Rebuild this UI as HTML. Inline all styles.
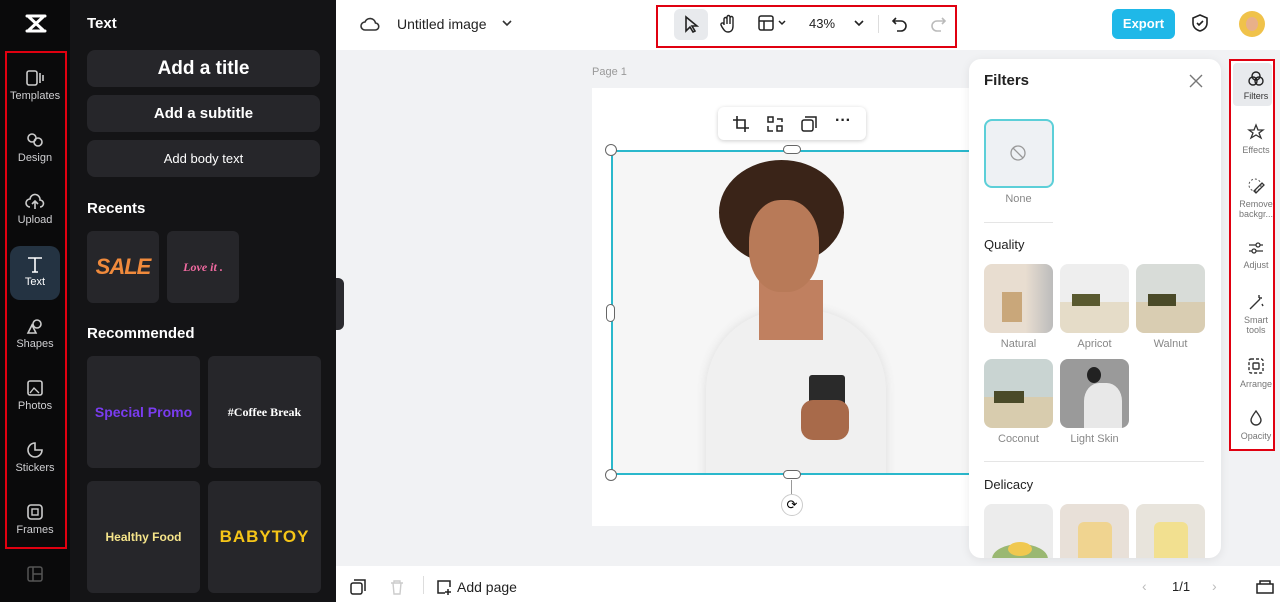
<!DOCTYPE html>
<html><head><meta charset="utf-8"><style>
*{box-sizing:border-box;margin:0;padding:0}
body{width:1280px;height:602px;overflow:hidden;font-family:"Liberation Sans",sans-serif;background:#f1f2f4;position:relative}
.abs{position:absolute}
.rail{left:0;top:0;width:70px;height:602px;background:#0a0a0b}
.panel{left:70px;top:0;width:266px;height:602px;background:#141416;color:#fff}
.ri{position:absolute;left:10px;width:50px;height:54px;color:#cfcfd2;font-size:11px;text-align:center}
.ri svg{display:block;margin:9px auto 3px}
.btn{position:absolute;left:17px;width:233px;background:#26262a;border-radius:8px;color:#fff;font-weight:bold;text-align:center}
.card{position:absolute;background:#26262a;border-radius:6px}
.top{left:336px;top:0;width:944px;height:50px;background:#fff}
.bot{left:336px;top:566px;width:944px;height:36px;background:#fff}
.ft{position:absolute;width:69px;height:69px;border-radius:8px;overflow:hidden}
.fl{position:absolute;font-size:11px;color:#888;width:69px;text-align:center}
.tl{position:absolute;width:46px;left:1233px;text-align:center;font-size:9px;color:#777}
.tl svg{display:block;margin:0 auto 4px}
</style></head><body>
<div class="abs rail">
<svg class="abs" style="left:24px;top:13px" width="24" height="21" viewBox="0 0 24 21"><path d="M3 3h18M3 18h18M5 4l14 13M19 4L5 17" stroke="#fff" stroke-width="3" stroke-linecap="round" fill="none"/></svg>
<div class="abs" style="left:5px;top:51px;width:62px;height:498px;border:2px solid #e00010"></div>
<div class="ri" style="top:60px"><svg width="20" height="18"><rect x="2" y="2" width="10" height="14" rx="2" fill="none" stroke="#ccc" stroke-width="1.6"/><path d="M15 4v10M18 6v6" stroke="#ccc" stroke-width="1.6"/></svg>Templates</div>
<div class="ri" style="top:122px"><svg width="20" height="18"><circle cx="7" cy="7" r="4" fill="none" stroke="#ccc" stroke-width="1.6"/><circle cx="13" cy="11" r="4" fill="none" stroke="#ccc" stroke-width="1.6"/></svg>Design</div>
<div class="ri" style="top:184px"><svg width="20" height="18"><path d="M5 14a4 4 0 0 1 0-8a5 5 0 0 1 10 1a3.5 3.5 0 0 1 0 7M10 16V9M7 11l3-3 3 3" fill="none" stroke="#ccc" stroke-width="1.6"/></svg>Upload</div>
<div class="ri" style="top:246px;background:#243342;border-radius:10px;color:#fff"><svg width="20" height="18"><path d="M3 3h14M10 3v14M7 17h6" stroke="#fff" stroke-width="1.6" fill="none"/></svg>Text</div>
<div class="ri" style="top:308px"><svg width="20" height="18"><circle cx="12" cy="7" r="4" fill="none" stroke="#ccc" stroke-width="1.6"/><path d="M3 16l4-8 4 8z" fill="none" stroke="#ccc" stroke-width="1.6"/></svg>Shapes</div>
<div class="ri" style="top:370px"><svg width="20" height="18"><rect x="3" y="2" width="14" height="14" rx="2" fill="none" stroke="#ccc" stroke-width="1.6"/><path d="M5 14l4-5 5 5" fill="none" stroke="#ccc" stroke-width="1.4"/></svg>Photos</div>
<div class="ri" style="top:432px"><svg width="20" height="18"><path d="M10 2a7 7 0 1 0 7 7h-7z" fill="none" stroke="#ccc" stroke-width="1.6"/></svg>Stickers</div>
<div class="ri" style="top:494px"><svg width="20" height="18"><rect x="3" y="2" width="14" height="14" rx="3" fill="none" stroke="#ccc" stroke-width="1.6"/><rect x="7" y="6" width="6" height="6" fill="none" stroke="#ccc" stroke-width="1.4"/></svg>Frames</div>
<svg class="abs" style="left:27px;top:566px" width="16" height="16"><rect x="1" y="1" width="14" height="14" rx="2" fill="none" stroke="#555" stroke-width="1.5"/><path d="M6 1v14M6 8h9" stroke="#555" stroke-width="1.5"/></svg>
</div>
<div class="abs panel">
<div class="abs" style="left:17px;top:15px;font-size:15px;font-weight:bold">Text</div>
<div class="btn" style="top:50px;height:37px;line-height:37px;font-size:19px">Add a title</div>
<div class="btn" style="top:95px;height:37px;line-height:37px;font-size:15px">Add a subtitle</div>
<div class="btn" style="top:140px;height:37px;line-height:37px;font-size:13px;font-weight:normal">Add body text</div>
<div class="abs" style="left:17px;top:200px;font-size:15px;font-weight:bold">Recents</div>
<div class="card" style="left:17px;top:231px;width:72px;height:72px;text-align:center;line-height:72px;color:#f08a3c;font-weight:bold;font-style:italic;font-size:22px;letter-spacing:-1px">SALE</div>
<div class="card" style="left:97px;top:231px;width:72px;height:72px;text-align:center;line-height:72px;color:#f06aa0;font-weight:bold;font-style:italic;font-size:12px;font-family:'Liberation Serif',serif">Love it .</div>
<div class="abs" style="left:17px;top:325px;font-size:15px;font-weight:bold">Recommended</div>
<div class="card" style="left:17px;top:356px;width:113px;height:112px;text-align:center;line-height:112px;color:#7a3cf0;font-weight:bold;font-size:14px">Special Promo</div>
<div class="card" style="left:138px;top:356px;width:113px;height:112px;text-align:center;line-height:112px;color:#fff;font-weight:bold;font-size:12px;font-family:'Liberation Serif',serif">#Coffee Break</div>
<div class="card" style="left:17px;top:481px;width:113px;height:112px;text-align:center;line-height:112px;color:#f5e48a;font-weight:bold;font-size:12px">Healthy Food</div>
<div class="card" style="left:138px;top:481px;width:113px;height:112px;text-align:center;line-height:112px;color:#f5c518;font-weight:bold;font-size:17px;letter-spacing:1px">BABYTOY</div>
</div>
<div class="abs" style="left:336px;top:278px;width:8px;height:52px;background:#2a2a2e;border-radius:0 6px 6px 0"></div>
<div class="abs top">
<svg class="abs" style="left:24px;top:15px" width="20" height="18"><path d="M5 15a4 4 0 0 1 0-8a5.5 5.5 0 0 1 10.5 1a3.5 3.5 0 0 1-0.5 7z" fill="none" stroke="#333" stroke-width="1.6"/></svg>
<div class="abs" style="left:61px;top:16px;font-size:14px;color:#222">Untitled image</div>
<svg class="abs" style="left:165px;top:18px" width="12" height="10"><path d="M2 3l4 4 4-4" fill="none" stroke="#333" stroke-width="1.6"/></svg>
<div class="abs" style="left:320px;top:5px;width:301px;height:43px;border:2px solid #e00010"></div>
<div class="abs" style="left:338px;top:9px;width:34px;height:31px;background:#e8eaed;border-radius:6px"></div>
<svg class="abs" style="left:347px;top:15px" width="16" height="18"><path d="M3 2v14l4-4 3 5 2-1-3-5h5z" fill="none" stroke="#222" stroke-width="1.6"/></svg>
<svg class="abs" style="left:383px;top:14px" width="18" height="20"><path d="M5 11V5a1.5 1.5 0 0 1 3 0v5V3a1.5 1.5 0 0 1 3 0v7V4a1.5 1.5 0 0 1 3 0v8c0 4-2 6-5 6s-4-2-6-5l-1-2a1.5 1.5 0 0 1 3-1z" fill="none" stroke="#222" stroke-width="1.4"/></svg>
<svg class="abs" style="left:422px;top:15px" width="30" height="18"><rect x="1" y="1" width="14" height="14" rx="2" fill="none" stroke="#222" stroke-width="1.5"/><path d="M1 6h14M6 6v9M21 6l3 3 3-3" fill="none" stroke="#222" stroke-width="1.5"/></svg>
<div class="abs" style="left:473px;top:16px;font-size:13px;color:#222">43%</div>
<svg class="abs" style="left:517px;top:18px" width="12" height="10"><path d="M2 3l4 4 4-4" fill="none" stroke="#222" stroke-width="1.6"/></svg>
<div class="abs" style="left:542px;top:15px;width:1px;height:18px;background:#ddd"></div>
<svg class="abs" style="left:555px;top:14px" width="18" height="18"><path d="M5 4L2 7l3 3M2 7h8a5 5 0 0 1 0 10H6" fill="none" stroke="#222" stroke-width="1.6"/></svg>
<svg class="abs" style="left:593px;top:14px" width="18" height="18"><path d="M13 4l3 3-3 3M16 7H8a5 5 0 0 0 0 10h4" fill="none" stroke="#bbb" stroke-width="1.6"/></svg>
<div class="abs" style="left:776px;top:9px;width:63px;height:30px;background:#1fb8e8;border-radius:6px;color:#fff;font-weight:bold;font-size:13px;text-align:center;line-height:30px">Export</div>
<svg class="abs" style="left:855px;top:13px" width="18" height="20"><path d="M9 2l7 3v5c0 4-3 7-7 8c-4-1-7-4-7-8V5z M6 10l2 2 4-4" fill="none" stroke="#222" stroke-width="1.6"/></svg>
<div class="abs" style="left:903px;top:11px;width:26px;height:26px;border-radius:50%;background:#f0c24a;overflow:hidden"><div style="margin:6px 0 0 7px;width:12px;height:14px;border-radius:50%;background:#e8b08a"></div></div>
</div>
<div class="abs" style="left:592px;top:66px;font-size:11px;color:#999">Page 1</div>
<div class="abs" style="left:592px;top:88px;width:390px;height:438px;background:#fff"></div>
<div class="abs" style="left:611px;top:150px;width:364px;height:325px;background:#f6f6f6;overflow:hidden">
 <div class="abs" style="left:95px;top:160px;width:180px;height:200px;background:#f0f0f0;border-radius:80px 80px 0 0;box-shadow:0 0 10px #ddd"></div>
 <div class="abs" style="left:148px;top:130px;width:64px;height:60px;background:#c08060"></div>
 <div class="abs" style="left:108px;top:10px;width:125px;height:105px;background:#3a2418;border-radius:50%"></div>
 <div class="abs" style="left:138px;top:50px;width:70px;height:92px;background:#b87a58;border-radius:45%"></div>
 <div class="abs" style="left:198px;top:225px;width:36px;height:50px;background:#2a2a2a;border-radius:3px"></div>
 <div class="abs" style="left:190px;top:250px;width:48px;height:40px;background:#a86a4a;border-radius:12px"></div>
</div>
<div class="abs" style="left:611px;top:150px;width:364px;height:325px;border:2px solid #2ab8cc"></div>
<div class="abs" style="left:605px;top:144px;width:12px;height:12px;border-radius:50%;background:#fff;border:1px solid #666"></div>
<div class="abs" style="left:605px;top:469px;width:12px;height:12px;border-radius:50%;background:#fff;border:1px solid #666"></div>
<div class="abs" style="left:783px;top:145px;width:18px;height:9px;border-radius:5px;background:#fff;border:1px solid #666"></div>
<div class="abs" style="left:783px;top:470px;width:18px;height:9px;border-radius:5px;background:#fff;border:1px solid #666"></div>
<div class="abs" style="left:606px;top:304px;width:9px;height:18px;border-radius:5px;background:#fff;border:1px solid #666"></div>
<div class="abs" style="left:791px;top:480px;width:1px;height:14px;background:#999"></div>
<div class="abs" style="left:781px;top:494px;width:22px;height:22px;border-radius:50%;background:#fff;border:1px solid #ccc;text-align:center;line-height:20px;font-size:13px">⟳</div>
<div class="abs" style="left:718px;top:107px;width:148px;height:33px;background:#fff;border-radius:6px;box-shadow:0 1px 4px rgba(0,0,0,.2)"></div>
<svg class="abs" style="left:732px;top:115px" width="18" height="18"><path d="M5 1v12h12M1 5h12v12" fill="none" stroke="#222" stroke-width="1.6"/></svg>
<svg class="abs" style="left:766px;top:115px" width="18" height="18"><rect x="2" y="2" width="5" height="5" fill="none" stroke="#222" stroke-width="1.5"/><rect x="11" y="11" width="5" height="5" fill="none" stroke="#222" stroke-width="1.5"/><path d="M11 4h5v3M2 11v5h5" fill="none" stroke="#222" stroke-width="1.5"/></svg>
<svg class="abs" style="left:800px;top:115px" width="18" height="18"><rect x="2" y="5" width="11" height="11" rx="2" fill="none" stroke="#222" stroke-width="1.5"/><path d="M5 2h11v11" fill="none" stroke="#222" stroke-width="1.5"/></svg>
<div class="abs" style="left:835px;top:112px;font-size:16px;font-weight:bold;color:#222">···</div>
<div class="abs" style="left:969px;top:59px;width:252px;height:499px;background:#fff;border-radius:12px;box-shadow:0 2px 10px rgba(0,0,0,.08);overflow:hidden">
 <div class="abs" style="left:15px;top:13px;font-size:15px;font-weight:bold;color:#222">Filters</div>
 <svg class="abs" style="left:220px;top:15px" width="14" height="14"><path d="M1 1l12 12M13 1L1 13" stroke="#777" stroke-width="1.4"/></svg>
 <div class="abs" style="left:15px;top:60px;width:70px;height:69px;border:2px solid #5ccfd8;border-radius:8px;background:#eef1f4"></div>
 <svg class="abs" style="left:40px;top:85px" width="18" height="18"><circle cx="9" cy="9" r="7" fill="none" stroke="#999" stroke-width="1.3"/><path d="M4 4l10 10" stroke="#999" stroke-width="1.3"/></svg>
 <div class="fl" style="left:15px;top:134px">None</div>
 <div class="abs" style="left:15px;top:163px;width:69px;height:1px;background:#e5e5e5"></div>
 <div class="abs" style="left:15px;top:178px;font-size:13px;color:#222">Quality</div>
 <div class="ft" style="left:15px;top:205px;background:linear-gradient(90deg,#e8ddd0 60%,#bcbcbc)"><div class="abs" style="left:18px;top:28px;width:20px;height:30px;background:#c9a77a"></div></div>
 <div class="ft" style="left:91px;top:205px;background:linear-gradient(#eeeeee 55%,#e5dcc8 55%)"><div class="abs" style="left:12px;top:30px;width:28px;height:12px;background:#5a5a30"></div></div>
 <div class="ft" style="left:167px;top:205px;background:linear-gradient(#d8dcd8 55%,#d9cdb2 55%)"><div class="abs" style="left:12px;top:30px;width:28px;height:12px;background:#4a4a28"></div></div>
 <div class="fl" style="left:15px;top:279px">Natural</div><div class="fl" style="left:91px;top:279px">Apricot</div><div class="fl" style="left:167px;top:279px">Walnut</div>
 <div class="ft" style="left:15px;top:300px;background:linear-gradient(#c9d4d2 55%,#d8ccae 55%)"><div class="abs" style="left:10px;top:32px;width:30px;height:12px;background:#4a4a28"></div></div>
 <div class="ft" style="left:91px;top:300px;background:#9a9a9a"><div class="abs" style="left:24px;top:24px;width:38px;height:45px;background:#e8e8e8;border-radius:40% 40% 0 0"></div><div class="abs" style="left:27px;top:8px;width:14px;height:16px;background:#222;border-radius:50%"></div></div>
 <div class="fl" style="left:15px;top:374px">Coconut</div><div class="fl" style="left:91px;top:374px">Light Skin</div>
 <div class="abs" style="left:15px;top:402px;width:220px;height:1px;background:#e5e5e5"></div>
 <div class="abs" style="left:15px;top:418px;font-size:13px;color:#222">Delicacy</div>
 <div class="ft" style="left:15px;top:445px;background:#ececec"><div class="abs" style="left:8px;top:40px;width:56px;height:30px;background:#9ab872;border-radius:50%"></div><div class="abs" style="left:24px;top:38px;width:24px;height:14px;background:#f0c850;border-radius:50%"></div></div>
 <div class="ft" style="left:91px;top:445px;background:#e8e0d8"><div class="abs" style="left:18px;top:18px;width:34px;height:50px;background:#f0d490;border-radius:6px"></div></div>
 <div class="ft" style="left:167px;top:445px;background:#e8e4dc"><div class="abs" style="left:18px;top:18px;width:34px;height:50px;background:#f2e090;border-radius:6px"></div></div>
</div>
<div class="abs" style="left:1229px;top:59px;width:46px;height:392px;border:2px solid #e00010;background:#fff"></div>
<div class="abs" style="left:1233px;top:63px;width:39px;height:43px;background:#e8eaed;border-radius:4px"></div>
<div class="tl" style="top:71px;color:#333"><svg width="18" height="16"><circle cx="9" cy="5" r="4" fill="none" stroke="#222" stroke-width="1.4"/><circle cx="6" cy="10" r="4" fill="none" stroke="#222" stroke-width="1.4"/><circle cx="12" cy="10" r="4" fill="none" stroke="#222" stroke-width="1.4"/></svg>Filters</div>
<div class="tl" style="top:123px"><svg width="18" height="18"><path d="M9 2l2 5 5 0-4 3 2 5-5-3-5 3 2-5-4-3 5 0z" fill="none" stroke="#333" stroke-width="1.3"/></svg>Effects</div>
<div class="tl" style="top:177px;line-height:10px"><svg width="18" height="18"><circle cx="8" cy="8" r="6" fill="none" stroke="#555" stroke-dasharray="2 2"/><path d="M7 14l8-8 2 2-8 8z" fill="none" stroke="#333" stroke-width="1.3"/></svg>Remove<br>backgr...</div>
<div class="tl" style="top:240px"><svg width="18" height="16"><path d="M2 5h14M2 11h14" stroke="#333" stroke-width="1.3"/><circle cx="11" cy="5" r="2" fill="#fff" stroke="#333" stroke-width="1.3"/><circle cx="7" cy="11" r="2" fill="#fff" stroke="#333" stroke-width="1.3"/></svg>Adjust</div>
<div class="tl" style="top:293px;line-height:10px"><svg width="18" height="18"><path d="M3 16l10-10M12 2v3M15 5h-3M15 11l1 2" stroke="#333" stroke-width="1.4" fill="none"/></svg>Smart<br>tools</div>
<div class="tl" style="top:357px"><svg width="18" height="18"><rect x="2" y="2" width="14" height="14" rx="2" fill="none" stroke="#333" stroke-width="1.4" stroke-dasharray="3 2"/><rect x="6" y="6" width="6" height="6" rx="1" fill="none" stroke="#333" stroke-width="1.4"/></svg>Arrange</div>
<div class="tl" style="top:409px"><svg width="18" height="18"><path d="M9 2c3 4 5 7 5 9a5 5 0 0 1-10 0c0-2 2-5 5-9z" fill="none" stroke="#333" stroke-width="1.4"/></svg>Opacity</div>
<div class="abs bot">
<svg class="abs" style="left:14px;top:13px" width="16" height="16"><rect x="1" y="4" width="11" height="11" rx="2" fill="none" stroke="#222" stroke-width="1.5"/><path d="M4 1h11v11" fill="none" stroke="#222" stroke-width="1.5"/></svg>
<svg class="abs" style="left:53px;top:13px" width="16" height="16"><path d="M2 4h12M5 4V2h6v2M4 4l1 11h6l1-11" fill="none" stroke="#ccc" stroke-width="1.4"/></svg>
<div class="abs" style="left:87px;top:10px;width:1px;height:18px;background:#ddd"></div>
<svg class="abs" style="left:100px;top:13px" width="16" height="16"><path d="M14 8V2H2v12h7M12 10v6M9 13h6" fill="none" stroke="#222" stroke-width="1.5"/></svg>
<div class="abs" style="left:121px;top:13px;font-size:14px;color:#222">Add page</div>
<div class="abs" style="left:806px;top:12px;font-size:14px;color:#bbb">‹</div>
<div class="abs" style="left:836px;top:13px;font-size:13px;color:#222">1/1</div>
<div class="abs" style="left:876px;top:12px;font-size:14px;color:#bbb">›</div>
<svg class="abs" style="left:920px;top:12px" width="18" height="16"><path d="M1 6h16v9H1zM4 6V3h10v3" fill="none" stroke="#222" stroke-width="1.5"/></svg>
</div>
</body></html>
